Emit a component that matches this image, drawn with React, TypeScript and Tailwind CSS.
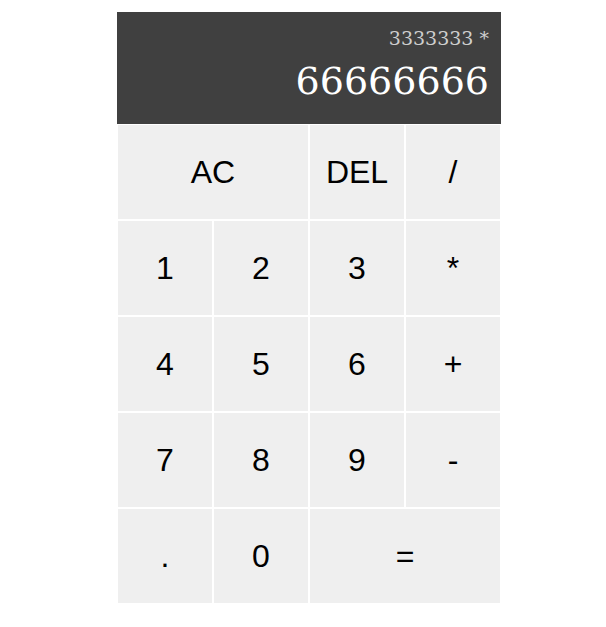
import React from 'react';

const keys: { label: string; span?: boolean }[] = [
  { label: 'AC', span: true },
  { label: 'DEL' },
  { label: '/' },
  { label: '1' },
  { label: '2' },
  { label: '3' },
  { label: '*' },
  { label: '4' },
  { label: '5' },
  { label: '6' },
  { label: '+' },
  { label: '7' },
  { label: '8' },
  { label: '9' },
  { label: '-' },
  { label: '.' },
  { label: '0' },
  { label: '=', span: true },
];

export default function App() {
  return (
    <div className="min-h-screen w-full bg-white pt-3 pl-3 flex justify-center">
      <div className="grid grid-cols-[repeat(4,96px)] grid-rows-[112px_repeat(5,96px)] self-start">
        {/* Display */}
        <div className="col-span-4 bg-[#404040] flex flex-col items-end justify-start p-[10px] pr-[12px] break-all font-['DejaVu_Serif',serif]">
          <div className="text-[19px] leading-none text-[#cfcfcf] mt-[7px]">3333333 *</div>
          <div className="text-[38px] leading-none text-white mt-[14px]">66666666</div>
        </div>

        {keys.map((k) => (
          <button
            key={k.label}
            className={`${k.span ? 'col-span-2' : ''} bg-[#efefef] border border-white text-[32px] text-black font-['Liberation_Sans',Arial,sans-serif] flex items-center justify-center`}
          >
            {k.label}
          </button>
        ))}
      </div>
    </div>
  );
}
